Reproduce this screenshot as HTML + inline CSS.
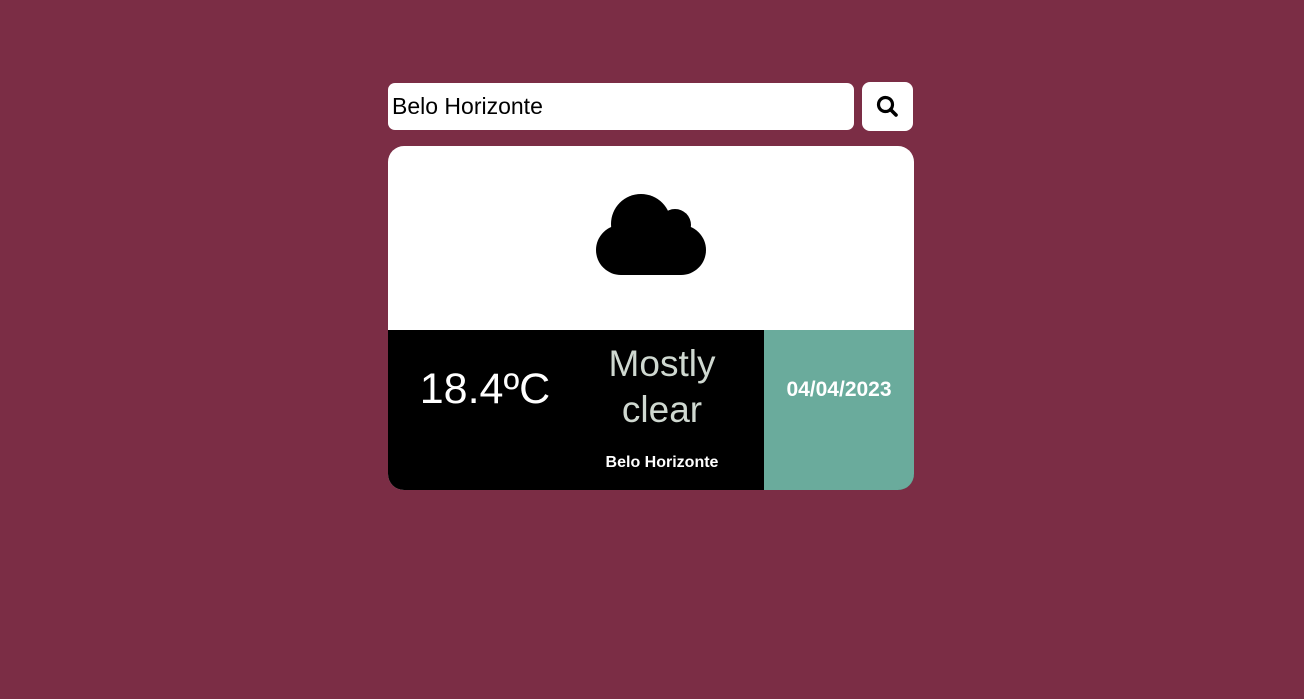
<!DOCTYPE html>
<html><head><style>
body{margin:0;background:#7b2d45;width:1304px;height:699px;position:relative;font-family:"Liberation Sans",sans-serif;overflow:hidden}
.inp{position:absolute;left:388px;top:83px;width:466px;height:47px;background:#fff;border-radius:7px;font-size:23px;line-height:47px;padding-left:4px;box-sizing:border-box;color:#000}
.btn{position:absolute;left:862px;top:82px;width:51px;height:49px;background:#fff;border-radius:8px}
.card{position:absolute;left:388px;top:146px;width:526px;height:344px;background:#fff;border-radius:16px;overflow:hidden}
.bot{position:absolute;left:0;top:184px;width:526px;height:160px;background:#000}
.date{position:absolute;left:376px;top:0;width:150px;height:160px;background:#6aab9c;color:#fff;font-weight:bold;font-size:21px;text-align:center;line-height:120px}
.temp{position:absolute;left:0;top:35px;width:194px;text-align:center;color:#fff;font-size:43px;font-weight:300}
.desc{position:absolute;left:195px;top:11px;width:158px;text-align:center;color:#cfd8d0;font-size:37px;font-weight:300;line-height:46px}
.city{position:absolute;left:195px;top:124px;width:158px;text-align:center;color:#fff;font-weight:bold;font-size:16px}
</style></head><body>
<div class="inp">Belo Horizonte</div>
<div class="btn"><svg width="51" height="49" viewBox="0 0 51 49"><circle cx="23.5" cy="22.5" r="7" fill="none" stroke="#000" stroke-width="3.2"/><line x1="28.5" y1="27.5" x2="34" y2="33" stroke="#000" stroke-width="3.6" stroke-linecap="round"/></svg></div>
<div class="card">
<svg style="position:absolute;left:0;top:0" width="526" height="184">
<circle cx="253" cy="78" r="30"/><circle cx="287" cy="79" r="16"/><rect x="208" y="79" width="110" height="50" rx="25"/>
</svg>
<div class="bot">
<div class="temp">18.4ºC</div>
<div class="desc">Mostly<br>clear</div>
<div class="city">Belo Horizonte</div>
<div class="date">04/04/2023</div>
</div>
</div>
</body></html>
